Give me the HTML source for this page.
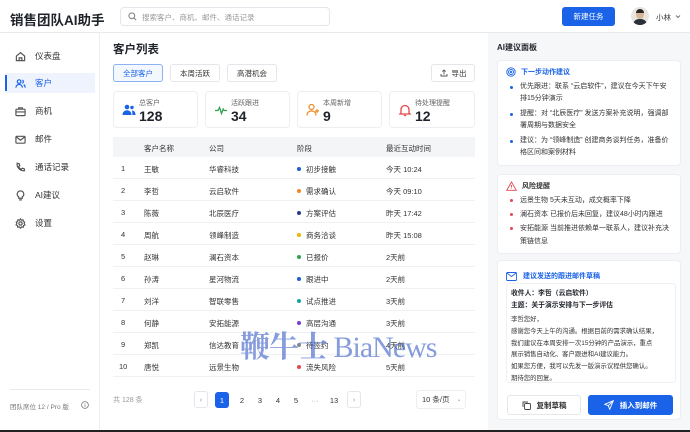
<!DOCTYPE html>
<html><head><meta charset="utf-8"><style>
*{box-sizing:border-box;margin:0;padding:0}
body{width:690px;height:432px;overflow:hidden;font-family:"Liberation Sans","Noto Sans CJK SC",sans-serif;color:#1f2329;background:#fff;position:relative;font-size:8px}
.abs{position:absolute}
.top{left:0;top:0;width:690px;height:33px;border-bottom:1px solid #e8eaee;background:#fff}
.side{left:0;top:33px;width:100px;height:397px;border-right:1px solid #eceef1;background:#fff}
.nav{position:absolute;left:5px;width:90px;height:20px;display:flex;align-items:center;padding-left:10px;font-size:8.5px;color:#333}
.nav svg{width:11px;height:11px;margin-right:9px;stroke:#555;fill:none;stroke-width:1.3}
.nav.act{background:#eef3fd;color:#1a63e8}
.nav.act svg{stroke:#1a63e8}
.btn{position:absolute;border:1px solid #e3e6ea;border-radius:3px;background:#fff;font-size:7.5px;color:#333;display:flex;align-items:center;justify-content:center}
.card{position:absolute;border:1px solid #eceef1;border-radius:4px;background:#fff}
.stat .lb{position:absolute;left:25px;top:6px;font-size:7px;color:#666}
.stat .v{position:absolute;left:25px;top:16px;font-size:14px;font-weight:bold;color:#1f2329}
.stat svg{position:absolute;left:8px;top:11px;width:14px;height:14px}
.row{position:absolute;left:113px;width:362px;height:22px;border-bottom:1px solid #f0f1f3;font-size:7.5px;color:#333}
.row span{position:absolute;top:7px}
.dot{display:inline-block;width:4px;height:4px;border-radius:50%;margin-right:5px;vertical-align:1px}
.rp{left:488px;top:33px;width:202px;height:397px;background:#f6f7f9}
.li{position:relative;padding-left:14px;font-size:7px;line-height:12px;color:#333;margin-bottom:3px}
.li:before{content:"";position:absolute;left:4px;top:5px;width:3px;height:3px;border-radius:50%;background:#1a63e8}
.red .li:before{background:#e5484d}
.red .li{margin-bottom:1px;line-height:13px}
.pg{position:absolute;top:392px;font-size:7.5px;color:#333;width:14px;height:16px;display:flex;align-items:center;justify-content:center}
.ml{white-space:nowrap}
</style></head><body>
<div class="abs top">
 <div class="abs" style="left:10px;top:9px;font-size:13.5px;font-weight:bold;color:#1f2329">销售团队AI助手</div>
 <div class="abs" style="left:120px;top:7px;width:210px;height:19px;border:1px solid #e3e6ea;border-radius:4px;">
  <svg class="abs" style="left:7px;top:4px" width="9" height="9" viewBox="0 0 10 10" fill="none" stroke="#888" stroke-width="1.2"><circle cx="4.2" cy="4.2" r="3.2"/><path d="M6.6 6.6L9 9"/></svg>
  <div class="abs" style="left:21px;top:4px;font-size:7.5px;color:#999">搜索客户、商机、邮件、通话记录</div></div>
 <div class="abs" style="left:562px;top:7px;width:53px;height:19px;background:#1a63e8;border-radius:3px;color:#fff;font-size:7.5px;display:flex;align-items:center;justify-content:center">新建任务</div>
 <div class="abs" style="left:631px;top:7px;width:18px;height:18px;border-radius:50%;background:#e9e4df;overflow:hidden"><div class="abs" style="left:5px;top:3px;width:8px;height:9px;border-radius:50%;background:#d7b59c"></div><div class="abs" style="left:5px;top:2px;width:8px;height:4px;border-radius:4px 4px 0 0;background:#2a2522"></div><div class="abs" style="left:2px;top:12px;width:14px;height:8px;border-radius:6px 6px 0 0;background:#2b2f38"></div></div>
 <div class="abs" style="left:656px;top:12px;font-size:7.5px;color:#333">小林</div>
 <svg class="abs" style="left:675px;top:14px" width="6" height="5" viewBox="0 0 6 5" fill="none" stroke="#777"><path d="M1 1.5l2 2 2-2"/></svg>
</div>
<div class="abs side">
 <div class="nav" style="top:13px"><svg viewBox="0 0 12 12"><path d="M1.5 5.5L6 1.8l4.5 3.7V10.5h-9z M4.5 10.5V7.5h3v3"/></svg>仪表盘</div>
 <div class="nav act" style="top:40px"><div class="abs" style="left:0;top:2px;width:2px;height:16px;background:#1a63e8"></div><svg viewBox="0 0 12 12"><circle cx="4.5" cy="4" r="2"/><path d="M1 10.5c0-2 1.6-3.5 3.5-3.5S8 8.5 8 10.5M8 2.2a2 2 0 010 3.6M9.5 7.3c1 .5 1.6 1.6 1.6 3.2"/></svg>客户</div>
 <div class="nav" style="top:68px"><svg viewBox="0 0 12 12"><rect x="1" y="3.5" width="10" height="7" rx="1"/><path d="M4 3.5V2h4v1.5M1 6.5h10"/></svg>商机</div>
 <div class="nav" style="top:96px"><svg viewBox="0 0 12 12"><rect x="1" y="2.5" width="10" height="7.5" rx="1"/><path d="M1.3 3l4.7 3.8L10.7 3"/></svg>邮件</div>
 <div class="nav" style="top:124px"><svg viewBox="0 0 12 12"><path d="M2.5 1.5l2 .3.7 2.2-1.3 1a6 6 0 003 3l1-1.3 2.2.7.3 2c-4.5.8-9-3.7-8-8z"/></svg>通话记录</div>
 <div class="nav" style="top:152px"><svg viewBox="0 0 12 12"><path d="M6 1a3.5 3.5 0 00-2 6.4V9h4V7.4A3.5 3.5 0 006 1zM4.5 10.8h3"/></svg>AI建议</div>
 <div class="nav" style="top:180px"><svg viewBox="0 0 12 12"><circle cx="6" cy="6" r="1.8"/><path d="M6 1l1 1.4 1.7-.4.4 1.7L10.5 4.5 10 6l.8 1.5-1.5.8-.3 1.7-1.7-.3L6 11l-1.3-1.3-1.7.3-.3-1.7-1.5-.8L2 6l-.6-1.5 1.4-.8.4-1.7 1.7.4z"/></svg>设置</div>
 <div class="abs" style="left:10px;top:356px;width:80px;border-top:1px solid #e8eaee"></div>
 <div class="abs" style="left:10px;top:368px;font-size:6.5px;color:#777">团队席位 12 / Pro 版</div>
 <svg class="abs" style="left:81px;top:368px" width="8" height="8" viewBox="0 0 8 8" fill="none" stroke="#777" stroke-width=".8"><circle cx="4" cy="4" r="3.4"/><path d="M4 3.5v2.3M4 2.2v.6"/></svg>
</div>

<div class="abs" style="left:113px;top:41px;font-size:11.5px;font-weight:bold">客户列表</div>
<div class="btn" style="left:113px;top:64px;width:50px;height:18px;border-color:#8fb2f3;background:#f3f7fe;color:#1a63e8">全部客户</div>
<div class="btn" style="left:170px;top:64px;width:50px;height:18px">本周活跃</div>
<div class="btn" style="left:227px;top:64px;width:50px;height:18px">高潜机会</div>
<div class="btn" style="left:431px;top:64px;width:44px;height:18px"><svg width="8" height="8" viewBox="0 0 8 8" fill="none" stroke="#555" stroke-width=".9" style="margin-right:4px"><path d="M4 5.5V1M2.3 2.6L4 1l1.7 1.6M1 5v2h6V5"/></svg>导出</div>

<div class="card stat" style="left:113px;top:91px;width:85px;height:37px"><svg viewBox="0 0 14 14" fill="#1a63e8"><circle cx="5" cy="4" r="2.3"/><path d="M0.5 12c0-3 2-4.7 4.5-4.7S9.5 9 9.5 12z"/><circle cx="10" cy="4.5" r="1.7"/><path d="M10 7.5c2 0 3.5 1.5 3.5 4.5H10.5z"/></svg><div class="lb">总客户</div><div class="v">128</div></div>
<div class="card stat" style="left:205px;top:91px;width:85px;height:37px"><svg viewBox="0 0 14 14" fill="none" stroke="#2ea44f" stroke-width="1.3"><path d="M1 7.5h3l1.5-3 2 6 1.7-4.5 1 1.5H13"/></svg><div class="lb">活跃跟进</div><div class="v">34</div></div>
<div class="card stat" style="left:297px;top:91px;width:85px;height:37px"><svg viewBox="0 0 14 14" fill="none" stroke="#f08a24" stroke-width="1.2"><circle cx="5.5" cy="4" r="2.5"/><path d="M1 12.5c0-3 2-4.5 4.5-4.5S10 9.5 10 12.5M11 6v4M9 8h4"/></svg><div class="lb">本周新增</div><div class="v">9</div></div>
<div class="card stat" style="left:389px;top:91px;width:86px;height:37px"><svg viewBox="0 0 14 14" fill="none" stroke="#e5484d" stroke-width="1.3"><path d="M3 10V6.5a4 4 0 018 0V10l1 1H2zM5.8 12.5h2.4"/></svg><div class="lb">待处理提醒</div><div class="v">12</div></div>

<div class="abs" style="left:113px;top:137px;width:362px;height:20px;background:#f4f5f7;font-size:7.5px;color:#333">
 <span class="abs" style="left:31px;top:6px">客户名称</span><span class="abs" style="left:96px;top:6px">公司</span><span class="abs" style="left:184px;top:6px">阶段</span><span class="abs" style="left:273px;top:6px">最近互动时间</span></div>
<div class="row" style="top:157px"><span style="left:8px">1</span><span style="left:31px">王敏</span><span style="left:96px">华睿科技</span><span style="left:184px"><i class="dot" style="background:#1a5fd0"></i>初步接触</span><span style="left:273px">今天 10:24</span></div>
<div class="row" style="top:179px"><span style="left:8px">2</span><span style="left:31px">李哲</span><span style="left:96px">云启软件</span><span style="left:184px"><i class="dot" style="background:#f08a24"></i>需求确认</span><span style="left:273px">今天 09:10</span></div>
<div class="row" style="top:201px"><span style="left:8px">3</span><span style="left:31px">陈薇</span><span style="left:96px">北辰医疗</span><span style="left:184px"><i class="dot" style="background:#2d3a8c"></i>方案评估</span><span style="left:273px">昨天 17:42</span></div>
<div class="row" style="top:223px"><span style="left:8px">4</span><span style="left:31px">周航</span><span style="left:96px">领峰制造</span><span style="left:184px"><i class="dot" style="background:#f0b400"></i>商务洽谈</span><span style="left:273px">昨天 15:08</span></div>
<div class="row" style="top:245px"><span style="left:8px">5</span><span style="left:31px">赵琳</span><span style="left:96px">澜石资本</span><span style="left:184px"><i class="dot" style="background:#2ea44f"></i>已报价</span><span style="left:273px">2天前</span></div>
<div class="row" style="top:267px"><span style="left:8px">6</span><span style="left:31px">孙涛</span><span style="left:96px">星河物流</span><span style="left:184px"><i class="dot" style="background:#1a5fd0"></i>跟进中</span><span style="left:273px">2天前</span></div>
<div class="row" style="top:289px"><span style="left:8px">7</span><span style="left:31px">刘洋</span><span style="left:96px">智联零售</span><span style="left:184px"><i class="dot" style="background:#16a3a3"></i>试点推进</span><span style="left:273px">3天前</span></div>
<div class="row" style="top:311px"><span style="left:8px">8</span><span style="left:31px">何静</span><span style="left:96px">安拓能源</span><span style="left:184px"><i class="dot" style="background:#7b3fd0"></i>高层沟通</span><span style="left:273px">3天前</span></div>
<div class="row" style="top:333px"><span style="left:8px">9</span><span style="left:31px">郑凯</span><span style="left:96px">信达教育</span><span style="left:184px"><i class="dot" style="background:#888"></i>待签约</span><span style="left:273px">4天前</span></div>
<div class="row" style="top:355px"><span style="left:6px">10</span><span style="left:31px">唐悦</span><span style="left:96px">远景生物</span><span style="left:184px"><i class="dot" style="background:#e5484d"></i>流失风险</span><span style="left:273px">5天前</span></div>

<div class="abs" style="left:113px;top:395px;font-size:7px;color:#999">共 128 条</div>
<div class="btn" style="left:194px;top:391px;width:14px;height:17px;color:#999">‹</div>
<div class="pg" style="left:215px;background:#1a63e8;color:#fff;border-radius:3px">1</div>
<div class="pg" style="left:235px">2</div><div class="pg" style="left:253px">3</div><div class="pg" style="left:271px">4</div><div class="pg" style="left:289px">5</div><div class="pg" style="left:308px;color:#999">···</div><div class="pg" style="left:327px">13</div>
<div class="btn" style="left:347px;top:391px;width:14px;height:17px;color:#999">›</div>
<div class="btn" style="left:416px;top:390px;width:50px;height:19px;border-color:#eee;justify-content:flex-start;padding-left:5px">10 条/页<span style="margin-left:7px;color:#999;font-size:6px">⌄</span></div>

<div class="abs" style="left:240px;top:322px;font-family:'Liberation Serif','Noto Serif CJK SC',serif;font-size:30px;font-weight:bold;color:rgba(60,95,200,0.62);letter-spacing:-1px;white-space:nowrap">鞭牛士 <span style="font-weight:normal">BiaNews</span></div>

<div class="abs rp">
 <div class="abs" style="left:9px;top:9px;font-size:8px;font-weight:bold">AI建议面板</div>
 <div class="card" style="left:9px;top:27px;width:184px;height:106px;padding:6px 8px">
  <div style="font-size:7px;color:#1a63e8;display:flex;align-items:center;margin-bottom:4px;font-weight:bold"><svg width="10" height="10" viewBox="0 0 10 10" fill="none" stroke="#1a63e8" stroke-width=".9" style="margin-right:5px"><circle cx="5" cy="5" r="4.2"/><circle cx="5" cy="5" r="2.5"/><circle cx="5" cy="5" r=".8"/></svg>下一步动作建议</div>
  <div class="li">优先跟进：联系 “云启软件”，建议在今天下午安排15分钟演示</div>
  <div class="li">提醒：对 “北辰医疗” 发送方案补充说明，强调部署周期与数据安全</div>
  <div class="li">建议：为 “领峰制造” 创建商务谈判任务，准备价格区间和案例材料</div>
 </div>
 <div class="card red" style="left:9px;top:141px;width:184px;height:80px;padding:6px 8px">
  <div style="font-size:7px;color:#333;display:flex;align-items:center;margin-bottom:3px;font-weight:bold"><svg width="11" height="10" viewBox="0 0 11 10" fill="none" stroke="#e5484d" stroke-width=".9" style="margin-right:5px"><path d="M5.5 1L10.3 9.3H.7z M5.5 4v2.5M5.5 7.4v.5"/></svg>风险提醒</div>
  <div class="li">远景生物 5天未互动，成交概率下降</div>
  <div class="li">澜石资本 已报价后未回复，建议48小时内跟进</div>
  <div class="li">安拓能源 当前推进依赖单一联系人，建议补充决策链信息</div>
 </div>
 <div class="card" style="left:9px;top:227px;width:184px;height:160px">
  <div class="abs" style="left:8px;top:10px;font-size:7px;color:#1a63e8;display:flex;align-items:center;font-weight:bold"><svg width="11" height="9" viewBox="0 0 11 9" fill="none" stroke="#1a63e8" stroke-width=".9" style="margin-right:6px"><rect x=".5" y=".5" width="10" height="8" rx="1"/><path d="M1 1l4.5 3.6L10 1"/></svg>建议发送的跟进邮件草稿</div>
  <div class="abs" style="left:8px;top:22px;width:170px;height:100px;border:1px solid #eef0f2;border-radius:3px;padding:4px 4px;font-size:6.8px;line-height:12px;color:#333;overflow:hidden">
   <div style="font-weight:bold;color:#1f2329">收件人：李哲（云启软件）</div>
   <div style="font-weight:bold;color:#1f2329;margin-bottom:2px">主题：关于演示安排与下一步评估</div>
   <div style="font-size:6.4px;line-height:11.8px">
    <div class="ml">李哲您好，</div>
    <div class="ml">感谢您今天上午的沟通。根据目前的需求确认结果，</div>
    <div class="ml">我们建议在本周安排一次15分钟的产品演示，重点</div>
    <div class="ml">展示销售自动化、客户跟进和AI建议能力。</div>
    <div class="ml">如果您方便，我可以先发一版演示议程供您确认。</div>
    <div class="ml">期待您的回复。</div>
   </div>
  </div>
  <div class="btn" style="left:9px;top:134px;width:74px;height:20px;font-weight:bold"><svg width="9" height="9" viewBox="0 0 9 9" fill="none" stroke="#444" stroke-width=".9" style="margin-right:6px"><rect x="2.5" y="2.5" width="6" height="6" rx="1"/><path d="M1 6V1h5"/></svg>复制草稿</div>
  <div class="btn" style="left:90px;top:134px;width:85px;height:20px;background:#1a63e8;border-color:#1a63e8;color:#fff;font-weight:bold"><svg width="10" height="10" viewBox="0 0 10 10" fill="none" stroke="#fff" stroke-width=".9" style="margin-right:6px"><path d="M9.3.7L.7 4.3l3.6 1.4 1.4 3.6zM9.3.7L4.3 5.7"/></svg>插入到邮件</div>
 </div>
</div>
<div class="abs" style="left:0;top:430px;width:690px;height:2px;background:#222"></div>
</body></html>
